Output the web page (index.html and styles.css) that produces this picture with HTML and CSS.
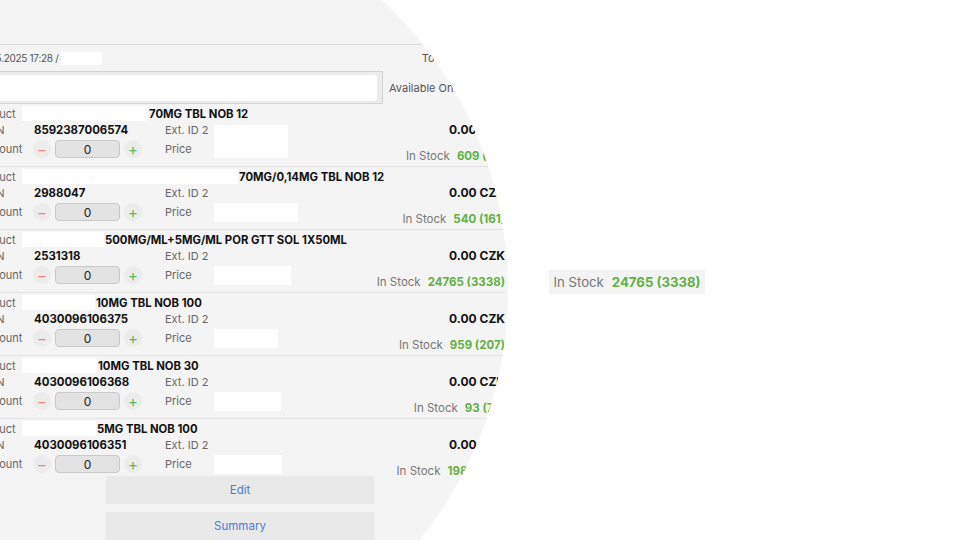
FILE: index.html
```html
<!DOCTYPE html>
<html>
<head>
<meta charset="utf-8">
<link rel="stylesheet" href="styles.css">
</head>
<body>
<div class="stage">
  <div class="app">
    <div class="nav"></div>
    <div class="meta">
      <span class="date">15.05.2025 17:28 /</span><span class="mask mask-user"></span>
      <span class="total">Total</span>
    </div>
    <div class="search-row">
      <div class="search"><div class="search-input"></div></div>
      <span class="avail">Available Only</span>
    </div>

    <div class="list">
      <div class="item">
        <div class="item-main">
          <div class="prod"><span class="label plabel">Product</span><span class="mask pmask" style="width:126px"></span><span class="name">70MG TBL NOB 12</span></div>
          <div class="grid">
            <span class="label lead">EAN</span><span class="val">8592387006574</span><span class="label">Ext. ID 2</span><span class="mask ext tall" style="width:74px"></span>
            <span class="label lead">Amount</span>
            <span class="stepper"><span class="step minus">&minus;</span><span class="qty">0</span><span class="step plus">+</span></span>
            <span class="label">Price</span>
          </div>
        </div>
        <div class="item-side"><div class="price">0.00 CZK</div><div class="stock"><span class="stock-label">In Stock</span><b class="stock-num">609 (57)</b></div></div>
      </div>

      <div class="item">
        <div class="item-main">
          <div class="prod"><span class="label plabel">Product</span><span class="mask pmask" style="width:216px"></span><span class="name">70MG/0,14MG TBL NOB 12</span></div>
          <div class="grid">
            <span class="label lead">EAN</span><span class="val">2988047</span><span class="label">Ext. ID 2</span><span></span>
            <span class="label lead">Amount</span>
            <span class="stepper"><span class="step minus">&minus;</span><span class="qty">0</span><span class="step plus">+</span></span>
            <span class="label">Price</span><span class="mask ext" style="width:84px"></span>
          </div>
        </div>
        <div class="item-side"><div class="price">0.00 CZK</div><div class="stock"><span class="stock-label">In Stock</span><b class="stock-num">540 (161)</b></div></div>
      </div>

      <div class="item">
        <div class="item-main">
          <div class="prod"><span class="label plabel">Product</span><span class="mask pmask" style="width:82px"></span><span class="name">500MG/ML+5MG/ML POR GTT SOL 1X50ML</span></div>
          <div class="grid">
            <span class="label lead">EAN</span><span class="val">2531318</span><span class="label">Ext. ID 2</span><span></span>
            <span class="label lead">Amount</span>
            <span class="stepper"><span class="step minus">&minus;</span><span class="qty">0</span><span class="step plus">+</span></span>
            <span class="label">Price</span><span class="mask ext" style="width:77px"></span>
          </div>
        </div>
        <div class="item-side"><div class="price">0.00 CZK</div><div class="stock"><span class="stock-label">In Stock</span><b class="stock-num">24765 (3338)</b></div></div>
      </div>

      <div class="item">
        <div class="item-main">
          <div class="prod"><span class="label plabel">Product</span><span class="mask pmask" style="width:73px"></span><span class="name">10MG TBL NOB 100</span></div>
          <div class="grid">
            <span class="label lead">EAN</span><span class="val">4030096106375</span><span class="label">Ext. ID 2</span><span></span>
            <span class="label lead">Amount</span>
            <span class="stepper"><span class="step minus">&minus;</span><span class="qty">0</span><span class="step plus">+</span></span>
            <span class="label">Price</span><span class="mask ext" style="width:64px"></span>
          </div>
        </div>
        <div class="item-side"><div class="price">0.00 CZK</div><div class="stock"><span class="stock-label">In Stock</span><b class="stock-num">959 (207)</b></div></div>
      </div>

      <div class="item">
        <div class="item-main">
          <div class="prod"><span class="label plabel">Product</span><span class="mask pmask" style="width:75px"></span><span class="name">10MG TBL NOB 30</span></div>
          <div class="grid">
            <span class="label lead">EAN</span><span class="val">4030096106368</span><span class="label">Ext. ID 2</span><span></span>
            <span class="label lead">Amount</span>
            <span class="stepper"><span class="step minus">&minus;</span><span class="qty">0</span><span class="step plus">+</span></span>
            <span class="label">Price</span><span class="mask ext" style="width:67px"></span>
          </div>
        </div>
        <div class="item-side"><div class="price">0.00 CZK</div><div class="stock"><span class="stock-label">In Stock</span><b class="stock-num">93 (72)</b></div></div>
      </div>

      <div class="item last">
        <div class="item-main">
          <div class="prod"><span class="label plabel">Product</span><span class="mask pmask" style="width:74px"></span><span class="name">5MG TBL NOB 100</span></div>
          <div class="grid">
            <span class="label lead">EAN</span><span class="val">4030096106351</span><span class="label">Ext. ID 2</span><span></span>
            <span class="label lead">Amount</span>
            <span class="stepper"><span class="step minus">&minus;</span><span class="qty">0</span><span class="step plus">+</span></span>
            <span class="label">Price</span><span class="mask ext" style="width:68px"></span>
          </div>
        </div>
        <div class="item-side"><div class="price">0.00 CZK</div><div class="stock"><span class="stock-label">In Stock</span><b class="stock-num">1987 (412)</b></div></div>
      </div>
    </div>

    <div class="actions">
      <div class="btn">Edit</div>
      <div class="btn">Summary</div>
    </div>
  </div>
</div>

<div class="callout"><span class="stock-label">In Stock</span><b class="stock-num">24765 (3338)</b></div>
</body>
</html>
```

FILE: styles.css
```css
* { box-sizing: border-box; }
html, body { margin: 0; padding: 0; }
body {
  width: 960px;
  height: 540px;
  background: #ffffff;
  font-family: Inter, "Liberation Sans", sans-serif;
  color: #111;
  overflow: hidden;
  position: relative;
}
.stage {
  width: 960px;
  height: 540px;
  background: #f4f4f4;
  clip-path: circle(397px at 111px 290px);
  overflow: hidden;
}
.app {
  margin-left: -26px;
  width: 531px;
}
.nav {
  height: 45px;
  border-bottom: 1px solid #dadada;
}
.meta {
  height: 26px;
  display: flex;
  align-items: center;
  font-size: 10px;
  color: #555;
}
.date { white-space: pre; margin-left: 4px; letter-spacing: -0.3px; }
.mask { background: #fff; display: inline-block; }
.mask-user { width: 41px; height: 13px; margin-left: 3px; }
.total { margin-left: auto; margin-right: 58px; color: #555; font-size: 11px; }
.search-row {
  display: flex;
  align-items: center;
}
.search {
  width: 409px;
  height: 33px;
  border: 1px solid #d2d2d2;
  border-left: none;
  background: #ececec;
  padding: 3px 5px 2px 0;
}
.search-input {
  height: 100%;
  background: #fff;
  border-radius: 3px;
}
.avail {
  margin-left: 6px;
  font-size: 11px;
  color: #555;
}
.item {
  display: flex;
  height: 63px;
  border-bottom: 1px solid #e2e2e2;
}
.item.last { border-bottom: none; height: 55px; }
.item-main {
  width: 320px;
  padding-top: 2px;
}
.label {
  font-size: 11px;
  color: #666;
  line-height: 18px;
}
.lead { padding-left: 8px; }
.prod {
  display: flex;
  align-items: center;
  height: 15px;
  white-space: nowrap;
}
.plabel { width: 48px; flex: none; padding-left: 1px; }
.pmask { height: 15px; flex: none; }
.name {
  font-size: 11.3px;
  font-weight: 700;
  margin-left: 1px;
}
.grid {
  display: grid;
  grid-template-columns: 60px 131px 49px auto;
  grid-template-rows: 18px 20px;
  align-items: center;
  white-space: nowrap;
}
.val {
  font-size: 11.4px;
  font-weight: 700;
}
.ext { height: 19px; justify-self: start; }
.ext.tall {
  grid-column: 4;
  grid-row: 1 / span 2;
  height: 33px;
  align-self: end;
  margin-bottom: 1px;
}
.stepper {
  display: flex;
  align-items: center;
  margin-left: -1px;
}
.step {
  width: 18px;
  height: 18px;
  border-radius: 50%;
  background: #ececec;
  display: flex;
  align-items: center;
  justify-content: center;
  font-size: 15px;
  line-height: 1;
}
.minus { color: #e58585; }
.plus { color: #62b65c; }
.qty {
  width: 65px;
  height: 18px;
  margin: 0 4px;
  background: #e3e3e3;
  border: 1px solid #c9c9c9;
  border-radius: 4px;
  font-size: 12px;
  display: flex;
  align-items: center;
  justify-content: center;
  color: #222;
}
.item-side {
  flex: 1;
  text-align: right;
  padding-top: 17px;
  white-space: nowrap;
}
.item.last .item-side { height: 63px; }
.price {
  font-size: 12px;
  font-weight: 700;
  line-height: 18px;
}
.stock {
  margin-top: 8px;
  line-height: 18px;
  font-size: 11.5px;
}
.stock-label { color: #777; }
.stock-num { color: #63b046; font-weight: 700; margin-left: 7px; }
.actions {
  margin-left: 132px;
  width: 268px;
  padding-top: 2px;
  display: flex;
  flex-direction: column;
  gap: 8px;
}
.btn {
  height: 28px;
  background: #e9e9e9;
  color: #4b7bd8;
  font-size: 11.5px;
  display: flex;
  align-items: center;
  justify-content: center;
}
.btn + .btn { padding-bottom: 1px; }
.callout {
  position: absolute;
  left: 549px;
  top: 270px;
  width: 156px;
  height: 24px;
  background: #f3f3f3;
  display: flex;
  align-items: center;
  justify-content: center;
  font-size: 13.2px;
  white-space: nowrap;
}
.callout .stock-num { margin-left: 8px; }
```
